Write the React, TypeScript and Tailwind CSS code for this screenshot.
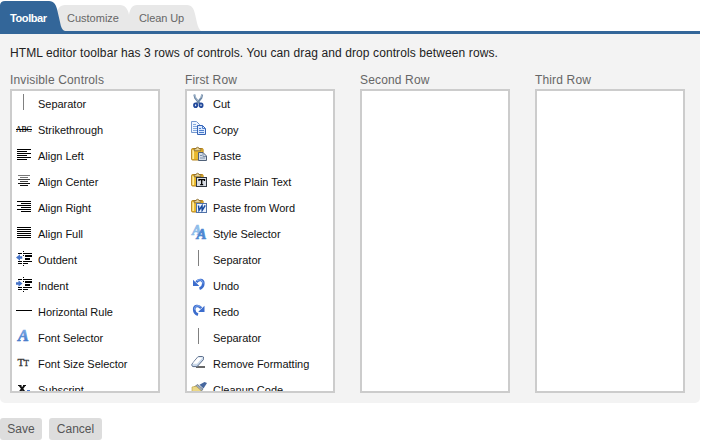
import type { ReactNode } from 'react';

const Icon = ({ children, dy = 0 }: { children?: ReactNode; dy?: number }) => (
  <svg width="16" height="16" viewBox="0 0 16 16" className="mb-1 block shrink-0 overflow-visible">
    <g transform={`translate(0 ${dy})`}>{children}</g>
  </svg>
);

type Line = [number, number, number];

const Lines = ({ rows, color = '#000' }: { rows: Line[]; color?: string }) => (
  <g shapeRendering="crispEdges" fill={color}>
    {rows.map(([x, y, w]) => (
      <rect key={`${x}-${y}`} x={x} y={y} width={w} height="1" />
    ))}
  </g>
);

const Separator = () => (
  <Icon>
    <rect x="7" y="0" width="1" height="16" fill="#808080" />
  </Icon>
);

const Strike = () => (
  <Icon dy={1}>
    <text x="0" y="11" fontSize="9" fontFamily="Liberation Serif, serif" stroke="#000" strokeWidth="0.2" textLength="15.5" lengthAdjust="spacingAndGlyphs">
      ABC
    </text>
    <rect x="0" y="8" width="16" height="1" fill="#000" />
  </Icon>
);

const AlignLeft = () => (
  <Icon>
    <Lines rows={[[1, 3, 14], [1, 5, 10], [1, 7, 14], [1, 9, 10], [1, 11, 14], [1, 13, 10]]} />
  </Icon>
);

const AlignCenter = () => (
  <Icon>
    <Lines color="#777" rows={[[2, 3, 12], [4, 5, 8]]} />
    <Lines color="#444" rows={[[2, 7, 12], [4, 9, 8]]} />
    <Lines color="#111" rows={[[2, 11, 12], [4, 13, 8]]} />
  </Icon>
);

const AlignRight = () => (
  <Icon>
    <Lines rows={[[1, 3, 14], [5, 5, 10], [1, 7, 14], [5, 9, 10], [1, 11, 14], [5, 13, 10]]} />
  </Icon>
);

const AlignFull = () => (
  <Icon>
    <Lines rows={[[1, 3, 14], [1, 5, 14], [1, 7, 14], [1, 9, 14], [1, 11, 14], [1, 13, 14]]} />
  </Icon>
);

const IndentLines = () => (
  <Lines
    rows={[[7, 1, 1], [2, 3, 4], [7, 3, 1], [8, 3, 8], [7, 5, 1], [9, 5, 7], [9, 6, 7], [9, 8, 5], [9, 9, 5], [2, 11, 4], [7, 11, 9], [2, 13, 4], [7, 13, 5], [7, 15, 1]]}
  />
);

const Outdent = () => (
  <Icon>
    <IndentLines />
    <path d="M0 7.5 4 4.2v2.1h2.2v2.4H4v2.1z" fill="#4774c8" />
  </Icon>
);

const Indent = () => (
  <Icon>
    <IndentLines />
    <path d="M6.5 7.5 2.5 4.2v2.1H0v2.4h2.5v2.1z" fill="#4774c8" />
  </Icon>
);

const Rule = () => (
  <Icon>
    <rect x="0" y="8" width="16" height="1" fill="#000" />
  </Icon>
);

const Letter = ({ x, y, size, fill }: { x: number; y: number; size: number; fill: string }) => (
  <text x={x} y={y} fontSize={size} fontWeight="bold" fontStyle="italic" fontFamily="Liberation Serif, serif" fill={fill} stroke={fill} strokeWidth="0.7">
    A
  </text>
);

const FontIcon = () => (
  <Icon dy={1}>
    <defs>
      <linearGradient id="fontBlue" x1="0" y1="0" x2="0" y2="1">
        <stop offset="0" stopColor="#86b7ec" />
        <stop offset="1" stopColor="#3e70c4" />
      </linearGradient>
    </defs>
    <Letter x={2} y={11.5} size={16} fill="url(#fontBlue)" />
  </Icon>
);

const StyleIcon = () => (
  <Icon dy={1}>
    <Letter x={1} y={9.5} size={14} fill="#8fbdea" />
    <Letter x={5.5} y={13.5} size={15} fill="#4e87d2" />
  </Icon>
);

const FontSize = () => (
  <Icon dy={1.5}>
    <g fontFamily="Liberation Serif, serif" fill="#333" stroke="#333" strokeWidth="0.3">
      <text x="1.5" y="10.5" fontSize="11">T</text>
      <text x="7.7" y="10.5" fontSize="8.5">T</text>
    </g>
  </Icon>
);

const Subscript = () => (
  <Icon dy={1}>
    <path d="M3.7 4.500 8.500 11M8.500 4.500 3.700 11" stroke="#111" strokeWidth="2" />
    <path d="M2 4.500h3.500M7 4.500h3" stroke="#111" />
    <rect x="11" y="9" width="3" height="1.3" fill="#4774c8" />
  </Icon>
);

const Cut = () => (
  <Icon>
    <path d="M3.3.5 4.2 4 9 9.8M11.2.5 10.3 4 5.5 9.8" fill="none" stroke="#6d87a6" strokeWidth="2" />
    <path d="m3.6 1 1.5 3.3 2 2.8M10.9 1 9.5 4.2" fill="none" stroke="#c3d2e0" strokeWidth=".7" />
    <ellipse cx="4.600" cy="11.2" rx="1.600" ry="1.900" fill="#dfe8f6" stroke="#22499b" strokeWidth="1.8" />
    <ellipse cx="10" cy="11.2" rx="1.600" ry="1.900" fill="#dfe8f6" stroke="#22499b" strokeWidth="1.8" />
  </Icon>
);

const Copy = () => (
  <Icon dy={1}>
    <path d="M.5.5h5l3 3v8h-8z" fill="#eef5ff" stroke="#7598cf" />
    <path d="M2 3.5h3M2 5.5h4M2 7.5h4M2 9.5h4" stroke="#84aae0" />
    <path d="M6.500 4.500h5l3 3v6h-8z" fill="#dceaff" stroke="#3563b5" />
    <path d="M11.5 4.5v3h3M8 7.5h2M8 9.5h5M8 11.5h5" fill="none" stroke="#4c7dcc" />
  </Icon>
);

const Clipboard = () => (
  <g>
    <rect x=".6" y="1.5" width="11.5" height="11.5" rx="1" fill="#e9b92f" stroke="#b8851e" />
    <path d="M2.2 3v9" stroke="#ffec9d" strokeWidth="1.7" />
    <path d="M3.2 3.800V1.700h1.900C5.100-.200 8-.200 8 1.700h1.900v2.100z" fill="#e7d49b" stroke="#806122" strokeWidth=".8" />
  </g>
);

const Paste = () => (
  <Icon dy={1}>
    <Clipboard />
    <path d="M7.5 5.5h4.500l3.500 3.500v4.500h-8z" fill="#d5deea" stroke="#4f6078" />
    <path d="M12 6v3.5h3M9 8.5h2M9 11h5" fill="none" stroke="#7e91ab" />
  </Icon>
);

const PasteText = () => (
  <Icon dy={1}>
    <Clipboard />
    <rect x="5.5" y="4.5" width="10" height="9" fill="#d8dce3" stroke="#303640" />
    <path d="M8 8V6.700h5.500V8M10.700 6.700v5M9.200 11.700h3" fill="none" stroke="#000" strokeWidth="1.3" />
  </Icon>
);

const PasteWord = () => (
  <Icon dy={1}>
    <Clipboard />
    <rect x="5.5" y="4.5" width="10" height="9" fill="#edf4ff" stroke="#5273a8" />
    <path d="M7.500 6.500 8 11.300l3-4.500.200 4.500 3-5" fill="none" stroke="#184a9e" strokeWidth="1.5" />
  </Icon>
);

const Undo = () => (
  <Icon dy={1.5}>
    <path d="M5.3 4.6C8 1.2 12.6 2 12.3 6.2c-.1 2.600-1.500 4.200-3.800 5" fill="none" stroke="#3c6dcd" strokeWidth="2.6" />
    <path d="M6 3.4c3-2.300 6-.800 6 2.600" fill="none" stroke="#8fb5f5" strokeWidth="1" />
    <path d="M2 2.2v6.300h6.300L6.200 6.300 4.300 4.500z" fill="#3c6dcd" />
  </Icon>
);

const Redo = () => (
  <Icon dy={1.5}>
    <path d="M10.2 4.6C7.5 1.2 2.9 2 3.2 6.2c.1 2.600 1.500 4.200 3.800 5" fill="none" stroke="#3c6dcd" strokeWidth="2.6" />
    <path d="M9.5 3.4c-3-2.300-6-.800-6 2.600" fill="none" stroke="#8fb5f5" strokeWidth="1" />
    <path d="M13.5 2.2v6.300H7.200l2.100-2.200 1.900-1.800z" fill="#3c6dcd" />
  </Icon>
);

const Eraser = () => (
  <Icon dy={1.5}>
    <path d="M5 11.5h9" stroke="#000" strokeWidth="1.2" />
    <path d="M.8 8.8 6.5 1.7Q7 1 7.8 1h3.7q1.500.2 1 1.700V4L6.700 10.500q-.500.600-1.300.600H2Q.500 10.700.800 8.800z" fill="#c9d8ea" stroke="#5d6f8c" />
    <path d="m1.5 8.2 5.300-6.200h4.700L6 8.200z" fill="#fff" />
  </Icon>
);

const Cleanup = () => (
  <Icon dy={1.5}>
    <path d="m8.5 3.2 5-2.800 2.500 1-3.500 5.600" fill="#46679e" />
    <path d="M6.5 3 12 7.500l-3 4-7-5z" fill="#9ba8ba" stroke="#596779" strokeWidth=".7" />
    <path d="m1 5.5 4-.800L10 9l-3 4-6-1z" fill="#ecd887" stroke="#b69a3c" strokeWidth=".6" />
  </Icon>
);

type Control = { name: string; icon: () => ReactNode };

const invisible: Control[] = [
  { name: 'Separator', icon: Separator },
  { name: 'Strikethrough', icon: Strike },
  { name: 'Align Left', icon: AlignLeft },
  { name: 'Align Center', icon: AlignCenter },
  { name: 'Align Right', icon: AlignRight },
  { name: 'Align Full', icon: AlignFull },
  { name: 'Outdent', icon: Outdent },
  { name: 'Indent', icon: Indent },
  { name: 'Horizontal Rule', icon: Rule },
  { name: 'Font Selector', icon: FontIcon },
  { name: 'Font Size Selector', icon: FontSize },
  { name: 'Subscript', icon: Subscript },
];

const first: Control[] = [
  { name: 'Cut', icon: Cut },
  { name: 'Copy', icon: Copy },
  { name: 'Paste', icon: Paste },
  { name: 'Paste Plain Text', icon: PasteText },
  { name: 'Paste from Word', icon: PasteWord },
  { name: 'Style Selector', icon: StyleIcon },
  { name: 'Separator', icon: Separator },
  { name: 'Undo', icon: Undo },
  { name: 'Redo', icon: Redo },
  { name: 'Separator', icon: Separator },
  { name: 'Remove Formatting', icon: Eraser },
  { name: 'Cleanup Code', icon: Cleanup },
];

const Column = ({ title, items }: { title: string; items: Control[] }) => (
  <section className="w-[150px]">
    <h2 className="h-[19px] text-[12px] leading-[20px] tracking-[0.15px] whitespace-nowrap text-[#666]">{title}</h2>
    <ul className="h-[304px] overflow-hidden border-2 border-[#ccc] bg-white">
      {items.map(({ name, icon: Glyph }, i) => (
        <li key={i} className="flex h-[26px] items-center gap-[6px] pl-1 text-[11px] leading-[26px] tracking-[-0.02px] whitespace-nowrap text-[#111]">
          <Glyph />
          <span>{name}</span>
        </li>
      ))}
    </ul>
  </section>
);

export default function App() {
  return (
    <main className="h-[445px] w-[706px] overflow-hidden bg-white font-['Liberation_Sans',Arial,sans-serif]">
      <nav className="relative h-[34px] w-[700px] border-b-[3px] border-[#336699]">
        <svg width="210" height="31" className="absolute top-0 left-0">
          <path d="M126 31q3-2 3-8V15c1-6 3-10 8-10h50c5 0 7 4 8 9l2 9q1.500 6 4 8z" fill="#e8e8e8" />
          <path d="M56 31V15c1-6 4-10 9-10h55c5 0 8 4 9 10v8l3 8z" fill="#e8e8e8" />
          <path d="M0 31V5q.5-4 5-4h44c5 0 7 4 8 8l3 13c1 5 2 8 5 9z" fill="#336699" />
        </svg>
        <div className="relative flex h-[31px] pl-[10px] text-[11px] leading-[36px] text-[#666]">
          <span className="w-[57px] font-bold tracking-[-0.4px] text-white">Toolbar</span>
          <span className="w-[72px]">Customize</span>
          <span className="tracking-[-0.1px]">Clean Up</span>
        </div>
      </nav>
      <div className="h-[369px] w-[700px] rounded-b-[5px] bg-[#f3f3f3] px-[10px] pt-[10px]">
        <p className="h-[26px] text-[12px] leading-[18px] tracking-[0.1px] whitespace-nowrap text-[#222]">
          HTML editor toolbar has 3 rows of controls. You can drag and drop controls between rows.
        </p>
        <div className="flex gap-[25px]">
          <Column title="Invisible Controls" items={invisible} />
          <Column title="First Row" items={first} />
          <Column title="Second Row" items={[]} />
          <Column title="Third Row" items={[]} />
        </div>
      </div>
      <div className="flex gap-[7px] pt-[15px] text-[12px] text-[#555]">
        <button className="h-[22px] w-[42px] rounded-[3px] bg-[#ddd]">Save</button>
        <button className="h-[22px] w-[53px] rounded-[3px] bg-[#ddd]">Cancel</button>
      </div>
    </main>
  );
}
